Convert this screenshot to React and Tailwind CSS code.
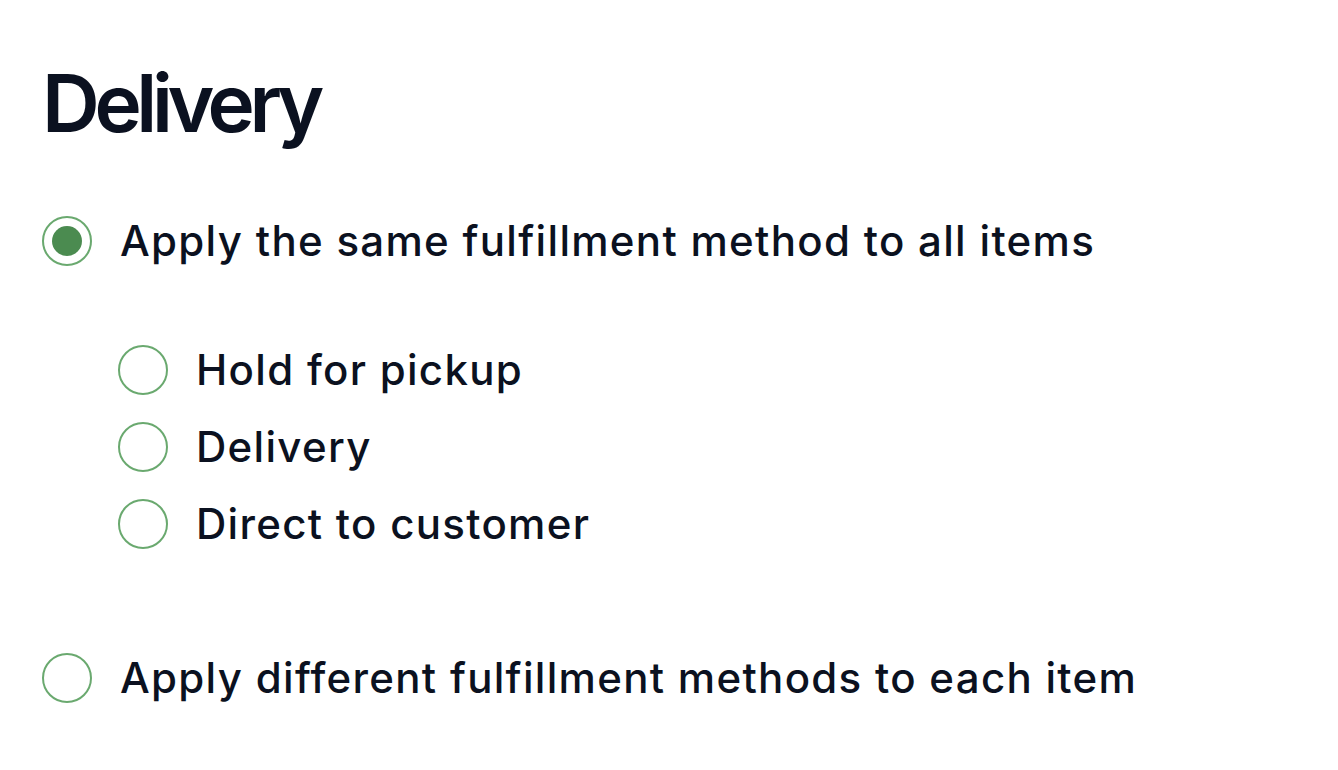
import React, { useState } from 'react';

const Radio = ({ checked }) => (
  <span className="flex h-[50px] w-[50px] shrink-0 items-center justify-center rounded-full border-2 border-[#6aa96f] bg-white">
    {checked && <span className="h-[30px] w-[30px] rounded-full bg-[#4b8b50]" />}
  </span>
);

const Option = ({ label, checked, onSelect, className = '' }) => (
  <div
    onClick={onSelect}
    className={`flex cursor-pointer items-center gap-[28px] ${className}`}
  >
    <Radio checked={checked} />
    <span className="text-[42px] leading-[50px] font-medium tracking-[0.031em] text-[#0b1120]">{label}</span>
  </div>
);

export default function App() {
  const [mode, setMode] = useState('same');
  const [method, setMethod] = useState(null);

  const methods = ['Hold for pickup', 'Delivery', 'Direct to customer'];

  return (
    <div
      className="min-h-[770px] w-full bg-white pl-[42px] pt-[63px]"
      style={{ fontFamily: 'Inter, "Noto Sans", sans-serif' }}
    >
      <h1 className="h-[80px] text-[80px] leading-[80px] font-semibold tracking-[-0.067em] text-[#0b1120]">
        Delivery
      </h1>

      <Option
        className="mt-[73px] h-[50px]"
        label="Apply the same fulfillment method to all items"
        checked={mode === 'same'}
        onSelect={() => setMode('same')}
      />

      <div className="mt-[65px] ml-[76px] flex flex-col">
        {methods.map((m) => (
          <Option
            key={m}
            className="h-[77px]"
            label={m}
            checked={mode === 'same' && method === m}
            onSelect={() => setMethod(m)}
          />
        ))}
      </div>

      <Option
        className="mt-[91px] h-[50px]"
        label="Apply different fulfillment methods to each item"
        checked={mode === 'different'}
        onSelect={() => setMode('different')}
      />
    </div>
  );
}
